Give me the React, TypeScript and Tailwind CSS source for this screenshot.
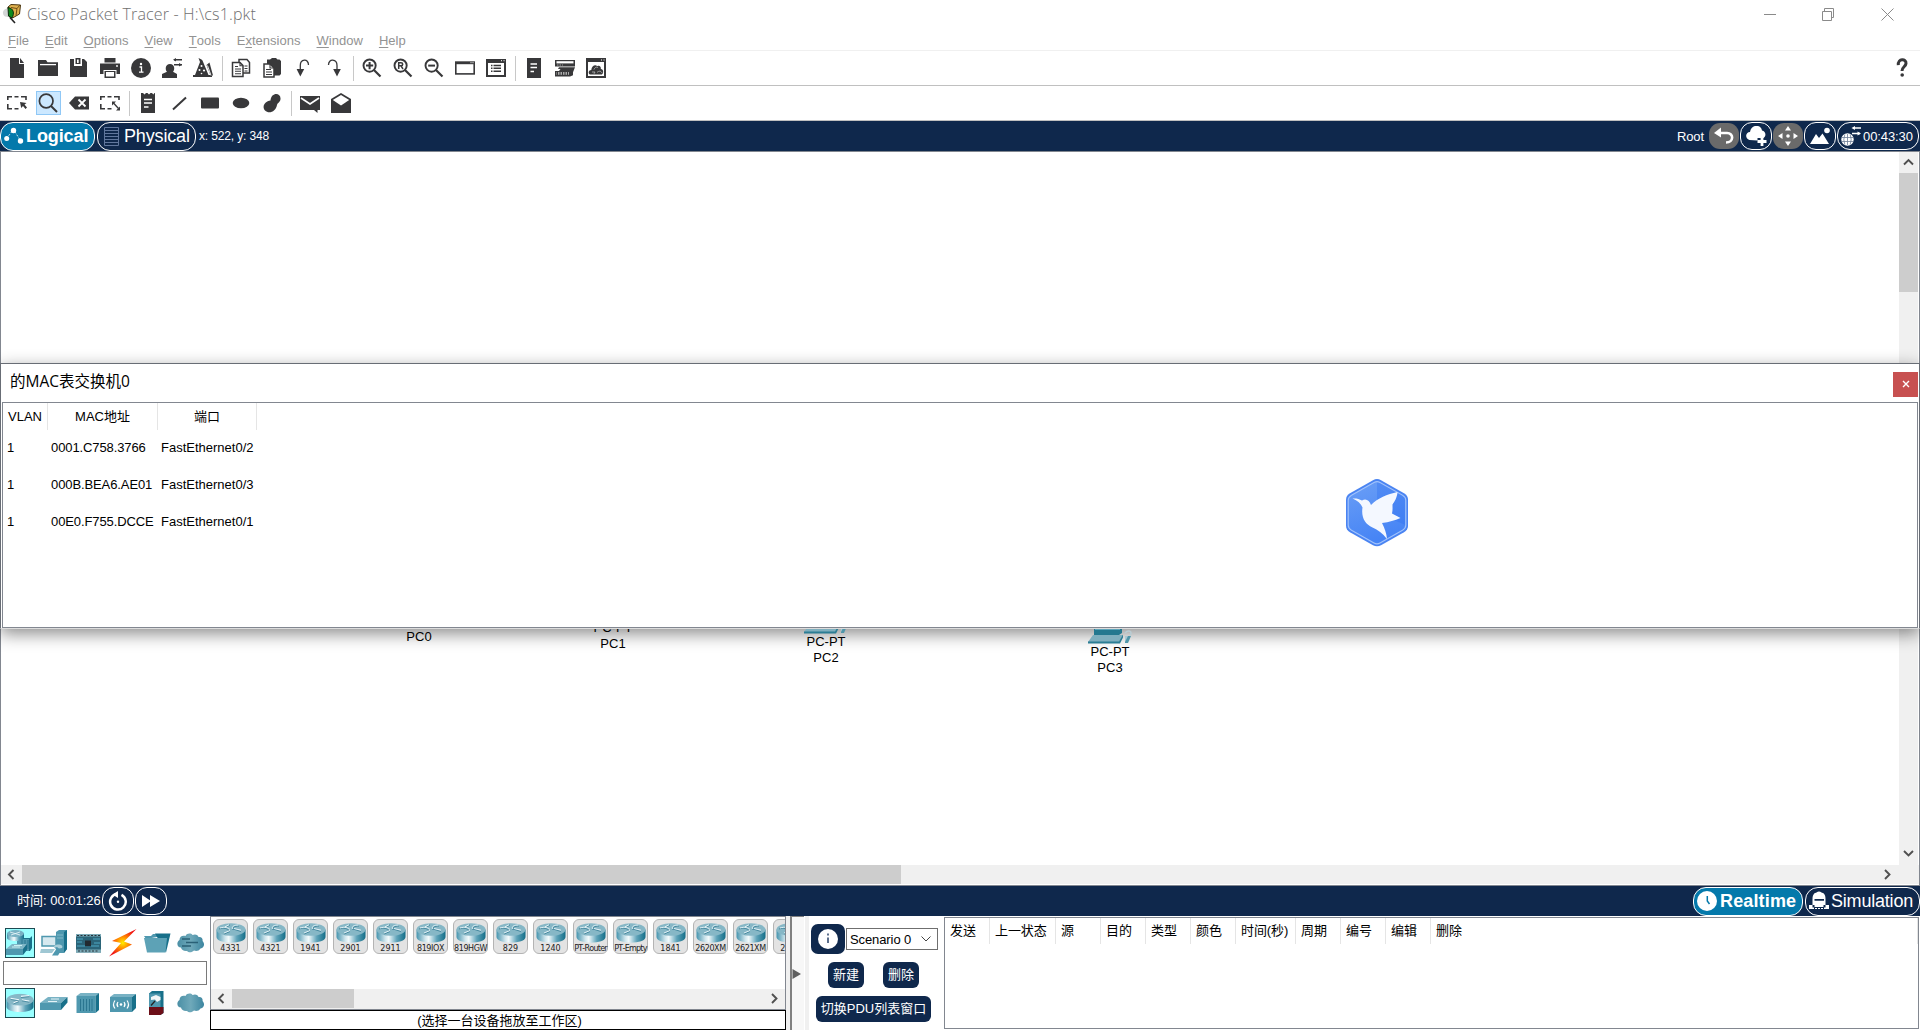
import type { ReactNode } from "react";

const D = "#38383a";

function Ico({ children, s = 20, v = 20, className = "" }: { children: ReactNode; s?: number; v?: number; className?: string }) {
  return (
    <svg width={s} height={s} viewBox={`0 0 ${v} ${v}`} fill={D} stroke="none" className={`block shrink-0 ${className}`}>
      {children}
    </svg>
  );
}

function Tool({ children, active = false }: { children: ReactNode; active?: boolean }) {
  return (
    <div className="flex w-[31px] shrink-0 items-center justify-center">
      <div
        className={
          active
            ? "flex h-6 w-[25px] items-center justify-center border border-[#90c8f6] bg-[#cce8ff]"
            : "flex h-6 w-[25px] items-center justify-center"
        }
      >
        <Ico>{children}</Ico>
      </div>
    </div>
  );
}

function Sep() {
  return (
    <div className="flex w-[7px] shrink-0 justify-center">
      <div className="h-[25px] w-px bg-[#c8c8c8]" />
    </div>
  );
}

const magnifier = (
  <>
    <circle cx="7.6" cy="7.6" r="6.1" fill="none" stroke={D} strokeWidth="1.9" />
    <path d="M12 12l6.5 6.5" stroke={D} strokeWidth="2.2" />
  </>
);

const dashedBox = (
  <path d="M.8 7V3.8H5M7.5 3.8h4M14 3.8h5V7M.8 11v4.8H5M7.5 15.8h4" fill="none" stroke={D} strokeWidth="1.6" />
);

function MainTools() {
  return (
    <div className="flex h-[35px] items-center border-b border-[#c0c0c0] pl-[1.5px]">
      <Tool>
        <path d="M3 0h9v6h5v14H3zM13 0l4 5h-4z" />
      </Tool>
      <Tool>
        <path d="M0 2h8l1.500 2.200H20V18H0z" />
        <path d="M2 6.600h16" stroke="#fff" strokeWidth="1.300" />
      </Tool>
      <Tool>
        <path d="M1 1h14l3 3v15H1z" />
        <path d="M5 1v7h8V1z" fill="#fff" />
        <path d="M6.500 0h5v6h-5z" />
        <path d="M8 1.500h1.700V5H8z" fill="#fff" />
      </Tool>
      <Tool>
        <path d="M4.500 0h11v4.500h-11zM0 5.500h20V16h-3.500v-4h-13v4H0zM4.500 13h11v7h-11z" />
        <path d="M6 14h8v4.500H6z" fill="#fff" />
        <circle cx="17" cy="8" r=".9" fill="#fff" />
      </Tool>
      <Tool>
        <circle cx="10" cy="10" r="10" />
        <path d="M8.500 9h2v5M8 14.200h4.500" stroke="#fff" strokeWidth="1.300" fill="none" />
        <circle cx="10" cy="6" r="1.200" fill="#fff" />
      </Tool>
      <Tool>
        <path d="M0 20v-4l5-2.200C3 12 3 6 8 6s5 6 3 7.800l4 2.200v4z" />
        <path d="M12 1.700h8M12 6.700h8" stroke={D} strokeWidth="1.600" />
        <path d="M11 1.700L14 0v3.400zM20 6.700L17 5v3.400z" />
      </Tool>
      <Tool>
        <path d="M5.500 0l3 1.500 1 1L15.500 17H19v2H0v-2h2L7 4z" />
        <path d="M13.500 7l3-2.500 3.500 13h-2.500z" />
        <path d="M14.500 7.500l3.500 10" stroke="#fff" strokeWidth=".9" />
        <circle cx="8.500" cy="8" r="1" fill="#fff" />
        <circle cx="6.500" cy="12" r="1" fill="#fff" />
        <circle cx="11" cy="12.500" r="1.100" fill="#fff" />
        <circle cx="8.500" cy="15.500" r=".8" fill="#fff" />
      </Tool>
      <Sep />
      <Tool>
        <g fill="#fff" stroke={D} strokeWidth="1.500">
          <path d="M8 1.500h8l2.500 3V15H8z" />
          <path d="M1.500 4.500H9l3 3v11H1.500z" />
          <path d="M9 4.500v3.300h3M4 8.500h3M4 11h6M4 13.300h6M4 15.700h6M13.500 8h3M13.500 10.500h3M13.500 13h3" strokeWidth="1.100" fill="none" />
        </g>
      </Tool>
      <Tool>
        <path d="M5 1.500h3L10 0h4l1.500 1.500h2L19 3v13l-1.500 1.500H5z" />
        <path d="M2 6h6l4 4v9H2z" fill="#fff" stroke={D} strokeWidth="1.500" />
        <path d="M8 6v4h4M4 11.500h5M4 14h6M4 16.500h6" stroke={D} strokeWidth="1.100" fill="none" />
      </Tool>
      <Tool>
        <path d="M7.300 14V7.500c0-6.500 8.200-7.500 8.200-.5" fill="none" stroke={D} strokeWidth="1.300" />
        <path d="M3.600 11h7.600L7.300 18.500z" />
      </Tool>
      <Tool>
        <path d="M13 14V7.500C13 1 4.500 0 4.500 7" fill="none" stroke={D} strokeWidth="1.300" />
        <path d="M9.200 11h7.600L13 18.500z" />
      </Tool>
      <Sep />
      <Tool>
        {magnifier}
        <path d="M4 7.600h7.200M7.600 4v7.200" stroke={D} strokeWidth="2" />
      </Tool>
      <Tool>
        {magnifier}
        <path d="M5.700 11V4.700h2.300c2.300 0 2.300 3.100 0 3.100H5.700M8 7.800l2 3.200" stroke={D} strokeWidth="1.500" fill="none" />
      </Tool>
      <Tool>
        {magnifier}
        <path d="M4.200 7.600h6.800" stroke={D} strokeWidth="2" />
      </Tool>
      <Tool>
        <path d="M0 3.300h20v13.400H0z" />
        <path d="M1.600 6.200h16.800v8.900H1.600z" fill="#fff" />
        <path d="M15.500 4.700h1M17.500 4.700h1" stroke="#fff" />
      </Tool>
      <Tool>
        <path d="M0 1h20v18H0z" />
        <path d="M2 5h16v12H2z" fill="#fff" />
        <path d="M15 2.700h1M17.500 2.700h1" stroke="#fff" />
        <path d="M5 7.500h1.500M7.500 7.500H15M5 10.300h1.500M7.500 10.300H15M5 13.200h1.500M7.500 13.200H15" stroke={D} strokeWidth="1.400" />
      </Tool>
      <Sep />
      <Tool>
        <path d="M3 0h14v20H3z" />
        <path d="M6.500 6H13M6.500 9.500H13M6.500 13.500H10" stroke="#fff" strokeWidth="1.300" />
      </Tool>
      <Tool>
        <path d="M0 2h20v6.500H0z" />
        <path d="M1.500 3.200h17v2.200h-17z" fill="#fff" />
        <path d="M2 7h6" stroke="#aaa" strokeWidth=".9" strokeDasharray="1.500 1" />
        <path d="M4 9.300h16l-2 5v3L15 18.500H0v-5.500h4l1.500-2H3z" />
        <path d="M1.500 14h12.500v2.800H1.500z" fill="#aaa" />
        <path d="M2.500 14v3M5 14v3M7.500 14v3M10 14v3M12.500 14v3" stroke={D} strokeWidth="1" />
      </Tool>
      <Tool>
        <path d="M0 0h20v20H0z" />
        <path d="M2 4h16v14H2z" fill="#fff" />
        <path d="M15 2h1M17.500 2h1" stroke="#fff" />
        <path d="M4 16.500c-2.500-1.500-1-4.700 1.300-4.500.3-4 4-6 6-3.800 2-1.200 4 .5 3.500 2.800 3 .3 3 4.300 1 5.500z" />
        <path d="M8 11.500c1-2.500 3-3 4-1.500M6 14h3l-1 1.800M11 14.500c2-2 4-1.500 5 .5" fill="none" stroke="#bbb" strokeWidth=".8" />
      </Tool>
      <div className="flex-1" />
      <Ico className="mr-2">
        <path d="M6.300 7.200C5.700 0 14.500.3 14 5.500c-.4 3.500-4 3.300-4 7.500" fill="none" stroke={D} strokeWidth="3" />
        <circle cx="10.200" cy="17" r="1.800" />
      </Ico>
    </div>
  );
}

function EditTools() {
  return (
    <div className="flex h-[35px] items-center border-b border-[#c0c0c0] pl-[1.5px]">
      <Tool>
        {dashedBox}
        <path d="M13 9l6.500 1-2 1.500 2.500 3-1.500 1.500-2.500-3-1.800 2z" />
      </Tool>
      <Tool active>
        <circle cx="8.200" cy="8" r="6.800" fill="none" stroke={D} strokeWidth="1.700" />
        <path d="M13 13l6 6" stroke={D} strokeWidth="2" />
      </Tool>
      <Tool>
        <path d="M0 10l6-6.500h14v13H6z" />
        <path d="M9.500 6.500l7 7M16.500 6.500l-7 7" stroke="#fff" strokeWidth="1.800" />
      </Tool>
      <Tool>
        {dashedBox}
        <path d="M13 9.500l5.500 6" stroke={D} strokeWidth="1.300" />
        <path d="M12 8.500h4L12 12.500zM20 17.500v-4l-4 4z" />
      </Tool>
      <Sep />
      <Tool>
        <path d="M3 0h2l1.500 1.500L8 0h1.500L11 1.500 12.500 0H14l1.300 1.500L16.500 0H17v20H3z" />
        <path d="M6 6.500h8M6 10h8M6 14h4.500" stroke="#fff" strokeWidth="1.400" />
      </Tool>
      <Tool>
        <path d="M4 16.500L17 4.500" stroke={D} strokeWidth="2" />
      </Tool>
      <Tool>
        <rect x="1" y="4.500" width="18" height="11" rx="1" />
      </Tool>
      <Tool>
        <ellipse cx="10" cy="10" rx="8.300" ry="5.300" />
      </Tool>
      <Tool>
        <path d="M8.500 7.500C9-1 19-1 18.500 6c-.3 3.500-3 3.500-3.500 6C14 18.500 7 21.500 3 17.500-.5 13.500 3 8 8.500 7.500z" />
      </Tool>
      <Sep />
      <Tool>
        <path d="M0 3h20v14h-2.500v3l-3.500-3H0z" />
        <path d="M1 5l9 6 9-6" fill="none" stroke="#fff" strokeWidth="1.700" />
      </Tool>
      <Tool>
        <path d="M10 0l10 6v14H0V6z" />
        <path d="M10 2l8.200 5-8.200 5.500L1.800 7z" fill="#fff" />
      </Tool>
    </div>
  );
}

function Menu() {
  const items: [string, string][] = [
    ["", "File"],
    ["", "Edit"],
    ["", "Options"],
    ["", "View"],
    ["", "Tools"],
    ["E", "xtensions"],
    ["", "Window"],
    ["", "Help"],
  ];
  return (
    <div className="flex h-[23px] items-center gap-4 border-b border-[#f0f0f0] pt-[3px] pl-2 text-[13px] leading-4 tracking-[0.02px] text-[#939393]">
      {items.map(([pre, rest]) => (
        <span key={rest}>
          {pre}
          <span className="underline underline-offset-2">{rest[0]}</span>
          {rest.slice(1)}
        </span>
      ))}
    </div>
  );
}

function TitleBar() {
  return (
    <div className="flex h-7 items-center pl-[2px]">
      <svg width="20" height="20" viewBox="0 0 20 20" className="block">
        <path d="M6 3l3-2.500 9.500.5-1 9-7 4-5-2z" fill="#dfb04c" stroke="#4a3510" strokeWidth="1" />
        <path d="M9 3.500l6 1M18 1l-3 3.500-1 7" stroke="#6e4b12" fill="none" />
        <path d="M7 4.500c-6-1-8 5.500-4 8l4 .5z" fill="#d3d6d6" />
        <path d="M6 3.500c6 1 6.500 6 4 10.500L6.500 12z" fill="#0d8a1c" stroke="#0a2a0a" />
        <path d="M8 13.500l5 5.500" stroke="#222" strokeWidth="1.600" />
      </svg>
      <span className="ml-[5px] flex-1 font-['Open_Sans','Noto_Sans',sans-serif] text-[16px] leading-5 font-light tracking-[0.15px] text-[#707070]">
        Cisco Packet Tracer - H:\cs1.pkt
      </span>
      <svg width="130" height="13" viewBox="0 0 130 13" fill="none" stroke="#8a8a8a" className="mr-[26px] block">
        <path d="M0 6.500h12M58.500 3.500h9v9h-9zM60.500 3V.5h9v9H68M117.500.5l12 12M129.500.5l-12 12" />
      </svg>
    </div>
  );
}

function NavBar() {
  return (
    <div className="flex h-[30px] items-center bg-[#0f284c] text-white">
      <div className="flex h-[29px] w-[95px] items-center rounded-[13px] border border-white bg-[#0479ab] pl-[3px] text-[18px] font-bold">
        <svg width="20" height="20" viewBox="0 0 20 20" fill="#fff" className="mr-[2px] block shrink-0">
          <path d="M2.500 12.500l7-9 7.500 12" stroke="#cfe6f0" strokeDasharray="2 1.500" fill="none" />
          <circle cx="9.500" cy="4.500" r="2.700" />
          <circle cx="2.700" cy="12.500" r="2.500" />
          <circle cx="16.500" cy="15" r="2.700" />
        </svg>
        <span className="tracking-[-0.1px]">Logical</span>
      </div>
      <div className="ml-[2px] flex h-[29px] w-[99px] items-center rounded-[13px] border border-white pl-[6px] text-[18px]">
        <svg width="15" height="19" viewBox="0 0 15 19" fill="none" stroke="#61779d" className="mr-[5px] block shrink-0">
          <path d="M.5.500h14v18H.5zM.5 3.500h14M.5 6.500h14M.5 9.500h14M.5 12.500h14M.5 15.500h14" />
        </svg>
        <span className="tracking-[-0.15px]">Physical</span>
      </div>
      <span className="ml-[3px] text-[12px] tracking-[-0.15px]">x: 522, y: 348</span>
      <div className="flex-1" />
      <span className="mr-[5px] pt-px text-[13px] tracking-[-0.1px]">Root</span>
      <div className="flex h-[26px] w-[30px] items-center justify-center rounded-[11px] bg-[#6a6a6a]">
        <svg width="20" height="18" viewBox="0 0 20 18" className="block">
          <path d="M0 6l7-5.500v10z" fill="#fff" />
          <path d="M5 6h8c7 0 7 9.500-1 9.500" stroke="#fff" strokeWidth="2.600" fill="none" />
        </svg>
      </div>
      <div className="ml-px flex h-7 w-8 items-center justify-center rounded-[12px] border border-white">
        <svg width="21" height="20" viewBox="0 0 21 20" fill="#fff" className="block">
          <path d="M3.500 14c-5-1.500-4-8 .5-8 1-8 11-8 12-1.500 4 .5 4.500 6 1.500 7.500h-6v2.500z" />
          <path d="M16 11v9M11.500 15.500h9" stroke="#fff" strokeWidth="2.800" />
        </svg>
      </div>
      <div className="ml-px flex h-[26px] w-[30px] items-center justify-center rounded-[11px] bg-[#6a6a6a]">
        <svg width="20" height="20" viewBox="0 0 20 20" fill="#fff" className="block">
          <path d="M10 0l3 4.500H7zM10 20l3-4.500H7zM0 10l4.500-3v6zM20 10l-4.500-3v6z" />
          <circle cx="10" cy="10" r="1.800" />
        </svg>
      </div>
      <div className="ml-px flex h-7 w-8 items-center justify-center rounded-[12px] border border-white">
        <svg width="20" height="18" viewBox="0 0 20 18" fill="#fff" className="block">
          <path d="M0 17L6 7l3 4 3.500-4.500L19 17z" />
          <circle cx="17" cy="3.500" r="2.800" />
        </svg>
      </div>
      <div className="mr-px ml-px flex h-7 w-[82px] items-center rounded-[13px] border border-white pl-[3px] text-[13px]">
        <svg width="20" height="20" viewBox="0 0 20 20" className="mr-[2px] block shrink-0">
          <circle cx="6.500" cy="13.500" r="6.200" fill="#fff" />
          <path d="M1 11.500h11M1 15.500h11M6.500 8v11M3.800 8.500q-2 5 0 10M9.200 8.500q2 5 0 10" stroke="#6f7f98" strokeWidth=".8" fill="none" />
          <path d="M12 2h8M11 7.500h8" stroke="#fff" strokeWidth="1.500" />
          <path d="M10.500 2l3.500-2v4zM20 7.500l-3.500-2v4z" fill="#fff" />
        </svg>
        <span className="pt-px tracking-[-0.1px]">00:43:30</span>
      </div>
    </div>
  );
}

const pcFont = "text-center text-[13px] leading-4 text-black";

function PcShape() {
  return (
    <svg width="44" height="16" viewBox="0 0 44 16" className="mx-auto block">
      <path d="M6 0h28v5l-3 2H6z" fill="#24788f" />
      <path d="M7 1.500h25" stroke="#5ea5ba" />
      <path d="M5 7h30l-4 7H0z" fill="#7fafbe" />
      <path d="M0 13.500h31l4-7v3l-3 6H0z" fill="#2b7d94" />
      <path d="M37 5c4-4 8-1 5 2.500" fill="none" stroke="#b9cdd4" strokeWidth="1.500" />
      <path d="M37 8h6l-3 7h-3z" fill="#4f96aa" />
      <path d="M37 8h3l-3 6z" fill="#a9c9d3" />
    </svg>
  );
}

const macRows: [string, string, string][] = [
  ["1", "0001.C758.3766", "FastEthernet0/2"],
  ["1", "000B.BEA6.AE01", "FastEthernet0/3"],
  ["1", "00E0.F755.DCCE", "FastEthernet0/1"],
];

function MacDialog() {
  return (
    <div className="absolute top-[211px] -left-px flex h-[266px] w-[1920px] flex-col border border-[#686d75] border-b-[#dcdcdc] bg-white px-px shadow-[0_5px_16px_rgba(0,0,0,0.45)]">
      <div className="flex h-[38px] shrink-0 items-center pl-2">
        <span className="flex-1 pb-[2px] font-['Open_Sans','Noto_Sans_CJK_SC',sans-serif] text-[15.5px]">的MAC表交换机0</span>
        <div className="mt-[2px] flex h-[25px] w-[25px] items-center justify-center bg-[#c75050]">
          <svg width="8" height="8" viewBox="0 0 8 8" stroke="#fff" strokeWidth="1.400" className="block">
            <path d="M1 1l6 6M7 1L1 7" />
          </svg>
        </div>
      </div>
      <div className="flex-1 border border-[#828790] text-[13px]">
        <div className="grid h-[26px] grid-cols-[45px_110px_99px] leading-[27px]">
          <div className="border-r border-[#e5e5e5] text-center">VLAN</div>
          <div className="border-r border-[#e5e5e5] text-center">MAC地址</div>
          <div className="border-r border-[#e5e5e5] text-center">端口</div>
        </div>
        {macRows.map((r) => (
          <div key={r[1]} className="grid h-[37px] grid-cols-[44px_110px_99px] leading-[37px]">
            <div className="pl-[4px]">{r[0]}</div>
            <div className="pl-[4px] tracking-[-0.1px] whitespace-nowrap">{r[1]}</div>
            <div className="pl-[4px]">{r[2]}</div>
          </div>
        ))}
      </div>
      <svg width="64" height="70" viewBox="0 0 64 70" className="absolute top-[114px] left-[1344px]">
        <defs>
          <linearGradient id="hexFill" x1="0" y1="0" x2="0.3" y2="1">
            <stop offset="0" stopColor="#6b9ff6" />
            <stop offset="1" stopColor="#4684f5" />
          </linearGradient>
        </defs>
        <path d="M28 2.200q4-2.200 8 0l23 13q4 2.300 4 6.500v26q0 4.200-4 6.500l-23 13q-4 2.200-8 0l-23-13q-4-2.300-4-6.500v-26q0-4.200 4-6.500z" fill="#4a84f2" />
        <path d="M29 4.500q3-1.700 6 0l22.500 12.700q3.300 2 3.300 5v25q0 3-3.300 5L35 65q-3 1.700-6 0L6.500 52.200q-3.300-2-3.300-5v-25q0-3 3.300-5z" fill="url(#hexFill)" stroke="#a0c2fc" strokeWidth="1.200" />
        <path d="M32 4.500q1.500 0 3 .8l22.500 12.500q2.500 1.500 2.500 4v25L32 35z" fill="#2f6ff0" opacity=".35" />
        <path d="M7.500 20.500c3.500-.3 6.500.2 9.500 2 4-2.500 7.500 0 9 4.500C33 20 42 16.500 52.500 14c-.5 6-3 9.500-5 12.500 0 3 .3 6-.5 9l8.500 4.500c-6 2.500-11 4-18.500 5 2.500 5 4.500 10 5 16-4.500-6-9-9-14.500-11.500-7.500-3.500-11.500-10-10-20-1.500-4-5-7-10-9z" fill="#f4f8ff" />
      </svg>
    </div>
  );
}

function Chevron({ dir }: { dir: "up" | "down" | "left" | "right" }) {
  const d = { up: "M1 7.500l4.500-4.500L10 7.500", down: "M1 3l4.500 4.500L10 3", left: "M7.500 1L3 5.500 7.500 10", right: "M3 1l4.500 4.500L3 10" }[dir];
  return (
    <svg width="11" height="11" viewBox="0 0 11 11" fill="none" stroke="#505050" strokeWidth="1.900" className="block">
      <path d={d} />
    </svg>
  );
}

function Workspace() {
  return (
    <div className="relative h-[735px] border border-[#828790]">
      <div className="flex h-[713px] pr-px">
        <div className="flex-1 bg-white" />
        <div className="flex w-[19px] flex-col items-center bg-[#f0f0f0]">
          <div className="flex h-[21px] items-center">
            <Chevron dir="up" />
          </div>
          <div className="h-[119px] w-full bg-[#cdcdcd]" />
          <div className="flex-1" />
          <div className="flex h-6 items-center">
            <Chevron dir="down" />
          </div>
        </div>
      </div>
      <div className="flex h-[19px] items-center bg-[#f0f0f0]">
        <div className="flex w-[21px] justify-center pr-px">
          <Chevron dir="left" />
        </div>
        <div className="h-[19px] w-[879px] bg-[#cdcdcd]" />
        <div className="flex-1" />
        <div className="mr-[26px]">
          <Chevron dir="right" />
        </div>
      </div>
      <MacDialog />
      <div className="absolute top-[477px] left-0 h-[80px] w-[1890px] overflow-hidden">
        <div className={`absolute top-0 left-[378px] w-20 ${pcFont}`}>PC0</div>
        <div className={`absolute -top-[9px] left-[572px] w-20 ${pcFont}`}>
          PC-PT
          <br />
          PC1
        </div>
        <div className={`absolute -top-[11px] left-[785px] w-20 ${pcFont}`}>
          <PcShape />
          PC-PT
          <br />
          PC2
        </div>
        <div className={`absolute -top-px left-[1069px] w-20 ${pcFont}`}>
          <PcShape />
          PC-PT
          <br />
          PC3
        </div>
      </div>
    </div>
  );
}

function StatusBar() {
  return (
    <div className="flex h-[30px] items-center bg-[#0f284c] text-white">
      <span className="ml-[17px] w-[85px] text-[13px] whitespace-nowrap">时间: 00:01:26</span>
      <div className="flex h-7 w-8 items-center justify-center rounded-[12px] border border-white">
        <svg width="20" height="20" viewBox="0 0 20 20" className="block">
          <path d="M9 3a7.800 7.800 0 1 0 4.500.8" fill="none" stroke="#fff" strokeWidth="2.500" />
          <path d="M4.500 3.500L10 0v7z" fill="#fff" />
          <circle cx="10" cy="10.700" r="1.200" fill="#fff" />
        </svg>
      </div>
      <div className="ml-px flex h-7 w-8 items-center justify-center rounded-[12px] border border-white">
        <svg width="18" height="14" viewBox="0 0 18 14" fill="#fff" className="block">
          <path d="M0 1l9 6-9 6zM8 1l10 6-10 6z" />
        </svg>
      </div>
      <div className="flex-1" />
      <div className="flex h-[29px] w-[110px] items-center rounded-[13px] border border-white bg-[#0479ab] pl-[3px] text-[18px] font-bold">
        <svg width="20" height="20" viewBox="0 0 20 20" className="mr-[3px] block shrink-0">
          <circle cx="10" cy="10" r="10" fill="#fff" />
          <path d="M10.300 5v5l2.200 3" fill="none" stroke="#0479ab" strokeWidth="1.500" />
        </svg>
        <span className="tracking-[0.15px]">Realtime</span>
      </div>
      <div className="ml-[2px] flex h-[29px] w-[115px] items-center rounded-[13px] border border-white pl-[3px] text-[18px]">
        <svg width="20" height="20" viewBox="0 0 20 20" fill="#fff" className="mr-[2px] block shrink-0">
          <path d="M7.500 1.500Q10-.5 12.500 1.500l2 .8c1.700 1.500 2 3 2 5.700v6H20v4H0v-4h3.500V8c0-2.700.5-4.200 2-5.700z" />
          <path d="M5.500 8h9.500v1.800H5.500zM3.500 14h2v2h9v-2h2v2.500H15V18h-1v-1h-2v1.500h-1V17H9v1.500H8V17H6v1H5v-1.500H3.500z" fill="#0f284c" />
        </svg>
        <span className="tracking-[-0.2px]">Simulation</span>
      </div>
    </div>
  );
}

function RouterShape() {
  return (
    <svg width="30" height="20" viewBox="0 0 30 20" className="block shrink-0">
      <defs>
        <linearGradient id="routerBody">
          <stop offset="0" stopColor="#4594ae" />
          <stop offset=".3" stopColor="#cfe5ec" />
          <stop offset=".42" stopColor="#f2fafc" />
          <stop offset=".7" stopColor="#5fa3b9" />
          <stop offset="1" stopColor="#146e88" />
        </linearGradient>
      </defs>
      <path d="M.5 6.500V14c0 7.500 29 7.500 29 0V6.500z" fill="url(#routerBody)" />
      <ellipse cx="15" cy="6.500" rx="14.500" ry="6.300" fill="#86b7c6" />
      <path d="M3 6c5-1.500 8-.5 10 1.500M10 4.800l4-3M17 7c-1-2.500 1.500-4 6-4M17 6l8 2.500M14 8.500L8 11" fill="none" stroke="#3d8199" strokeWidth=".9" />
      <path d="M4 5c5-1.500 8-.5 10 1.500M9 3.800l4-2M16.500 6c-1-2.500 1.500-4 6-4M18 5.500l7 1.700M14 7.500L8 10" fill="none" stroke="#edf7fa" strokeWidth=".9" />
    </svg>
  );
}

const TEAL = "#4f98af";
const DARK = "#18708a";
const LIGHT = "#8fc1cf";

function Cat({ children, active = false }: { children: ReactNode; active?: boolean }) {
  return (
    <div
      className={
        active
          ? "flex h-[30px] w-[30px] items-center justify-center border border-[#1d4a52] bg-[#99ffff]"
          : "flex h-[30px] w-[30px] items-center justify-center"
      }
    >
      <svg width="28" height="28" viewBox="0 0 28 28" className="block shrink-0">
        {children}
      </svg>
    </div>
  );
}

const cloudPath = "M4 18.500C0 18.500-1 13 2.500 11 2.500 7.500 5.500 6 8.500 7 10 4 14 4 15.500 6c3-1.500 5.500 0 6 2 3.500-.5 4.500 2 4 4 2.500 2.500 2 6.500-2 7.500-1.500 2.500-4.500 3-6.500 2-2.500 2.500-5.500 2-7 .5-3 .5-5.500-1-6-3.500z";

function CloudShape() {
  return (
    <>
      <defs>
        <linearGradient id="cloudFill">
          <stop offset="0" stopColor="#4a8fa5" />
          <stop offset=".5" stopColor="#6fa9ba" />
          <stop offset="1" stopColor="#3d86a0" />
        </linearGradient>
      </defs>
      <path d={cloudPath} fill="url(#cloudFill)" />
    </>
  );
}

function DevicePanel() {
  return (
    <div className="flex w-[210px] shrink-0 flex-col">
      <div className="flex gap-[4.200px] pt-3 pl-[5px]">
        <Cat active>
          <path d="M12 9h12l2-2v12l-2 3H12z" fill={DARK} />
          <path d="M11 10h12v12H11z" fill={TEAL} />
          <path d="M16 11v9M19 11v9M22 11v9" stroke="#2b7690" />
          <path d="M1 4v5c0 4 17 4 17 0V4z" fill="url(#routerBody)" />
          <ellipse cx="9.500" cy="4.500" rx="8.500" ry="3.500" fill="#78b2c4" />
          <path d="M4 3l10 3M14 3L5 6" stroke="#eaf6f9" strokeWidth=".8" />
          <path d="M0 20l6-5h15l-4 5z" fill="#7fb6c6" />
          <path d="M0 20h17v6H0z" fill={TEAL} />
          <path d="M17 20l4-5v6l-4 5z" fill={DARK} />
          <path d="M6 18h8M8 16.500h8" stroke="#dff" strokeWidth=".8" />
        </Cat>
        <Cat>
          <path d="M16 3l3-2h8v19l-3 4h-8z" fill={TEAL} />
          <path d="M24 3l3-2v19l-3 4z" fill={DARK} />
          <path d="M17 6h6M17 9h6" stroke={LIGHT} strokeWidth=".8" />
          <path d="M2 7.500h14V17H2z" fill="#d7e9ef" stroke={TEAL} strokeWidth="1.500" />
          <path d="M1 20h14l-3 4H0z" fill="#9fc7d3" />
          <path d="M14 17c4-3 10-1 8 3l-4 6.500h-6l4-6z" fill={TEAL} />
          <path d="M14 17c4-3 10-1 8 2l-3 .5-2-1.500-3 1z" fill="#a9ced9" />
        </Cat>
        <Cat>
          <path d="M2 5h25v18.500H2z" fill="#2b6478" />
          <path d="M2 5h25v2.500H2zM2 20.500h25v3H2z" fill="#7ba9b6" />
          <path d="M3 10h6M3 13h5M19 10h7M20 14h6M3 17h8M17 17h8" stroke="#4391aa" strokeWidth="1.300" />
          <path d="M11 11.500h6v5.500h-6z" fill="#222a30" />
          <path d="M3 6.500h23M4 22h21" stroke="#26323a" strokeDasharray="2 1.500" />
        </Cat>
        <Cat>
          <defs>
            <radialGradient id="bolt">
              <stop offset="0" stopColor="#ffef00" />
              <stop offset=".45" stopColor="#ff8a00" />
              <stop offset="1" stopColor="#f01515" />
            </radialGradient>
          </defs>
          <path d="M27.500 0L3 12l9 2L0 27.500 23 15.500l-8-3z" fill="url(#bolt)" />
        </Cat>
        <Cat>
          <path d="M1 7h7l2-2h5l-1 3-11 2z" fill={TEAL} />
          <path d="M12 4.500h15.500L23 23.500z" fill={DARK} />
          <path d="M1 9h23l-1.500 14.500H4z" fill="#5da2b6" />
        </Cat>
        <Cat>
          <CloudShape />
          <path d="M5 10h8M9 13.500h12M5 17h9" stroke="#2a6076" strokeWidth="1.300" />
        </Cat>
      </div>
      <div className="mt-[3px] ml-[3px] h-6 w-[204px] border border-[#7a7a7a] bg-white" />
      <div className="flex gap-[4.200px] pt-[3px] pl-[5px]">
        <Cat active>
          <svg x="0" y="4.500" width="28" height="19" viewBox="0 0 30 20">
            <path d="M.5 6.500V14c0 7.500 29 7.500 29 0V6.500z" fill="url(#routerBody)" />
            <ellipse cx="15" cy="6.500" rx="14.500" ry="6.300" fill="#86b7c6" />
            <path d="M5 5l9 1.500M16 3l9-1M8 10l6-2.500M17 6.500l8 1.500" fill="none" stroke="#edf7fa" strokeWidth="1.300" />
            <path d="M5 6.200l9 1.500M16 4.200l9-1M8 11l6-2.500M17 7.700l8 1.500" fill="none" stroke="#3d8199" strokeWidth=".8" />
          </svg>
        </Cat>
        <Cat>
          <path d="M0 14l8-6h19.500l-6.500 6z" fill="#78b2c4" />
          <path d="M0 14h21v7H0z" fill={TEAL} />
          <path d="M21 14l6.500-6v5.500L21 21z" fill={DARK} />
          <path d="M8 12.500h9M11 10h8" stroke="#e4f3f7" strokeWidth="1" />
        </Cat>
        <Cat>
          <path d="M2.500 7l4-3h18.500l-3.500 3z" fill="#78b2c4" />
          <path d="M2.500 7h19v17h-19z" fill={TEAL} />
          <path d="M21.500 7L25 4v17l-3.500 3z" fill={DARK} />
          <path d="M6.500 10v12M9.500 10v12M12.500 10v12M15.500 10v12M18 10v12" stroke="#2b7690" />
        </Cat>
        <Cat>
          <path d="M1 8l4-3h22l-4 3z" fill="#78b2c4" />
          <path d="M1 8h22v15H1z" fill={TEAL} />
          <path d="M23 8l4-3v14l-4 4z" fill={DARK} />
          <circle cx="12" cy="15.500" r="1.300" fill="#fff" />
          <path d="M9 13q-2 2.500 0 5M15 13q2 2.500 0 5M6 11.500q-3 4 0 8M18 11.500q3 4 0 8" stroke="#fff" strokeWidth="1.200" fill="none" />
        </Cat>
        <Cat>
          <path d="M6 4.500L9 2h11.500v22l-3 2H6z" fill={DARK} />
          <path d="M6 4.500h11.500V19H6z" fill={TEAL} />
          <path d="M6 18h14.500v6l-3 2H6z" fill="#6d0f18" />
          <path d="M8 8l5-2 4.500 2v3l-3.500 2-2-2.500-4 .5z" fill="#f2f6f7" />
          <path d="M12 12l-4 4.500" stroke="#222" strokeWidth="1.300" />
        </Cat>
        <Cat>
          <CloudShape />
        </Cat>
      </div>
    </div>
  );
}

const models = ["4331", "4321", "1941", "2901", "2911", "819IOX", "819HGW", "829", "1240", "PT-Router", "PT-Empty", "1841", "2620XM", "2621XM", "2811"];

function ModelPanel() {
  return (
    <div className="flex w-[576px] shrink-0 flex-col">
      <div className="flex h-[94px] flex-col border border-[#828790]">
        <div className="flex flex-1 gap-[5px] overflow-hidden pt-[2px] pl-[2px]">
          {models.map((m) => (
            <div key={m} className="flex h-[35px] w-[35px] shrink-0 flex-col items-center rounded-[6px] border border-[#b4b4b4] bg-[#e3e3e3] pt-[3px]">
              <RouterShape />
              <span
                className={
                  m.length > 7
                    ? "mt-px font-['DejaVu_Sans',sans-serif] text-[8px] leading-[10px] tracking-[-0.75px] whitespace-nowrap text-[#222]"
                    : m.length > 5
                      ? "mt-px font-['DejaVu_Sans',sans-serif] text-[8px] leading-[10px] tracking-[-0.4px] whitespace-nowrap text-[#222]"
                      : "mt-px font-['DejaVu_Sans',sans-serif] text-[8px] leading-[10px] text-[#222]"
                }
              >
                {m}
              </span>
            </div>
          ))}
        </div>
        <div className="flex h-5 items-start bg-[#f0f0f0]">
          <div className="flex h-[19px] w-[21px] items-center justify-center pr-px">
            <Chevron dir="left" />
          </div>
          <div className="h-[19px] w-[122px] bg-[#cdcdcd]" />
          <div className="flex-1" />
          <div className="mr-[5px] flex h-[19px] items-center">
            <Chevron dir="right" />
          </div>
        </div>
      </div>
      <div className="h-5 border border-black bg-white pl-[3px] text-center text-[13px] leading-[19px]">(选择一台设备拖放至工作区)</div>
    </div>
  );
}

const btn = "flex h-[26px] items-center justify-center rounded-[6px] bg-[#0f284c] text-[13px] text-white";

function ScenarioPanel() {
  return (
    <div className="flex w-[135px] shrink-0 flex-col pt-2">
      <div className="ml-[2px] flex items-center">
        <div className="flex h-[30px] w-[34px] items-center justify-center rounded-[7px] bg-[#0f284c]">
          <svg width="20" height="20" viewBox="0 0 20 20" className="block">
            <circle cx="10" cy="10" r="10" fill="#fff" />
            <path d="M10 8.500V14" stroke="#5d6f8c" strokeWidth="2" />
            <path d="M9 5.500h2" stroke="#5d6f8c" strokeWidth="1.800" />
          </svg>
        </div>
        <div className="ml-px flex h-[22px] w-[92px] items-center border border-[#6f6f6f] bg-white pl-[3px] text-[13px]">
          <span className="flex-1 pt-px tracking-[-0.1px] whitespace-nowrap">Scenario 0</span>
          <svg width="10" height="6" viewBox="0 0 10 6" fill="none" stroke="#444" className="mr-[6px] block">
            <path d="M.5.500L5 5 9.500.5" />
          </svg>
        </div>
      </div>
      <div className="mt-2 ml-[19px] flex gap-[19px]">
        <div className={`w-9 ${btn}`}>新建</div>
        <div className={`w-9 ${btn}`}>删除</div>
      </div>
      <div className={`mt-2 ml-[7px] w-[115px] ${btn}`}>切换PDU列表窗口</div>
    </div>
  );
}

function PduTable() {
  return (
    <div className="mt-px mr-px mb-px flex-1 border border-[#828790] bg-white">
      <div className="grid h-[26px] grid-cols-[45px_66px_45px_45px_45px_45px_60px_45px_45px_45px_1fr] text-[13px] leading-[26px]">
        {["发送", "上一状态", "源", "目的", "类型", "颜色", "时间(秒)", "周期", "编号", "编辑", "删除"].map((h) => (
          <div key={h} className="border-r border-[#e5e5e5] pl-[5px] tracking-[-0.1px] whitespace-nowrap">
            {h}
          </div>
        ))}
      </div>
    </div>
  );
}

export default function App() {
  return (
    <div className="flex h-[1030px] w-[1920px] flex-col overflow-hidden bg-white font-['Liberation_Sans','Noto_Sans_CJK_SC',sans-serif] text-black [font-kerning:none]">
      <TitleBar />
      <Menu />
      <MainTools />
      <EditTools />
      <NavBar />
      <Workspace />
      <StatusBar />
      <div className="flex h-[114px]">
        <DevicePanel />
        <ModelPanel />
        <div className="w-1 bg-[#f0f0f0]" />
        <div className="flex w-[14px] items-center border-t border-l-2 border-[#808080] bg-[#f7f7f7]">
          <svg width="9" height="10" viewBox="0 0 9 10" fill="#606060" className="block">
            <path d="M.5 0v10L9 5z" />
          </svg>
        </div>
        <div className="ml-px w-1 bg-[#f0f0f0]" />
        <ScenarioPanel />
        <PduTable />
      </div>
    </div>
  );
}
